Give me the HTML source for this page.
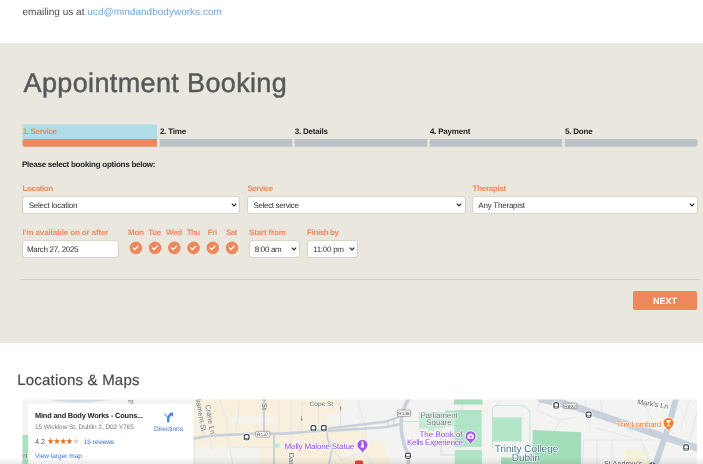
<!DOCTYPE html>
<html lang="en">
<head>
<meta charset="utf-8">
<title>Appointment Booking</title>
<style>
*{box-sizing:border-box;margin:0;padding:0}
html,body{width:703px;height:464px;overflow:hidden;background:#fff}
body{font-family:"Liberation Sans",sans-serif;position:relative;color:#444;text-rendering:geometricPrecision}
#root{position:absolute;left:0;top:0;width:703px;height:464px;will-change:transform}
.abs{position:absolute;white-space:nowrap}
#top{left:22.5px;top:6px;font-size:10px;line-height:14px;color:#4a4a4a;letter-spacing:0.02px}
#top a{color:#6fa8dc;text-decoration:none}
#panel{left:0;top:43px;width:703px;height:300px;background:#eae7df}
#h1{left:23.6px;top:63.4px;font-size:27px;line-height:40px;color:#57585a;letter-spacing:0.36px;-webkit-text-stroke:0.45px #57585a}
.step{top:124.4px;height:23px}
.step .lbl{height:14.5px;font-size:8px;line-height:15px;font-weight:bold;color:#222;padding-left:0.2px}
.step .bar{height:7.9px}
.step.on .lbl{color:#ef875d}
.b8{font-size:8px;line-height:10px;font-weight:bold;letter-spacing:-0.25px}
.or{color:#ef875d}
.sel{background:#fff;box-shadow:0 0 0 0.6px #c8c5be;border-radius:2px;padding-top:0.6px;font-size:8px;line-height:16.6px;color:#333}
.sel svg{position:absolute;right:2.2px;top:6.2px}
#hr{left:19.5px;top:279px;width:680.2px;height:1px;background:#d0cdc6}
#next{left:633px;top:291px;width:64px;height:19px;background:#ef875d;border-radius:2px;color:#fff;font-size:9px;font-weight:bold;line-height:20.4px;text-align:center;letter-spacing:0px}
#h2{left:17.2px;top:370.4px;font-size:15px;line-height:22px;color:#4a4a4a;letter-spacing:0.2px;-webkit-text-stroke:0.2px #4a4a4a}
</style>
</head>
<body>
<div id="root">
<div id="top" class="abs">emailing us at <a>ucd@mindandbodyworks.com</a></div>
<div id="panel" class="abs"></div>
<div id="h1" class="abs">Appointment Booking</div>

<svg class="abs" style="left:0;top:120px" width="703" height="30" viewBox="0 120 703 30">
<rect x="22.5" y="124.5" width="134.5" height="14.6" fill="#aedde5"/>
<path d="M24.5 139H157V146.8H24.5Q22.5 146.8 22.5 144.8V141Q22.5 139 24.5 139Z" fill="#ef875d"/>
<rect x="159.7" y="139" width="132.5" height="7.8" fill="#bcc2c8"/>
<rect x="294.6" y="139" width="132.7" height="7.8" fill="#bcc2c8"/>
<rect x="429.7" y="139" width="132.5" height="7.8" fill="#bcc2c8"/>
<path d="M564.9 139H695.5Q697.5 139 697.5 141V144.8Q697.5 146.8 695.5 146.8H564.9Z" fill="#bcc2c8"/>
</svg>
<div class="abs step on" style="left:22.5px;width:134.5px"><div class="lbl" style="letter-spacing:-0.34px">1. Service</div><div class="bar"></div></div>
<div class="abs step" style="left:159.7px;width:132.5px"><div class="lbl" style="letter-spacing:-0.2px">2. Time</div><div class="bar"></div></div>
<div class="abs step" style="left:294.6px;width:132.7px"><div class="lbl" style="letter-spacing:-0.21px">3. Details</div><div class="bar"></div></div>
<div class="abs step" style="left:429.7px;width:132.5px"><div class="lbl" style="letter-spacing:-0.2px">4. Payment</div><div class="bar"></div></div>
<div class="abs step last" style="left:564.9px;width:132.6px"><div class="lbl" style="letter-spacing:-0.23px">5. Done</div><div class="bar"></div></div>

<div class="abs b8" style="left:22px;top:160px;color:#222">Please select booking options below:</div>

<div class="abs b8 or" style="left:22.6px;top:183.7px;letter-spacing:-0.39px">Location</div>
<div class="abs b8 or" style="left:247.4px;top:183.7px;letter-spacing:-0.45px">Service</div>
<div class="abs b8 or" style="left:472.6px;top:183.7px;letter-spacing:-0.3px">Therapist</div>
<div class="abs sel" style="left:23px;top:197px;width:216.4px;height:16.0px;padding-left:5.7px;letter-spacing:-0.23px">Select location<svg width="6" height="4" viewBox="0 0 6 4"><path d="M0.8 0.7l2.2 2.2l2.2-2.2" fill="none" stroke="#222" stroke-width="1.15"/></svg></div>
<div class="abs sel" style="left:248px;top:197px;width:216.6px;height:16.0px;padding-left:5.5px;letter-spacing:-0.34px">Select service<svg width="6" height="4" viewBox="0 0 6 4"><path d="M0.8 0.7l2.2 2.2l2.2-2.2" fill="none" stroke="#222" stroke-width="1.15"/></svg></div>
<div class="abs sel" style="left:473px;top:197px;width:224.1px;height:16.0px;padding-left:5.3px;letter-spacing:-0.216px">Any Therapist<svg width="6" height="4" viewBox="0 0 6 4"><path d="M0.8 0.7l2.2 2.2l2.2-2.2" fill="none" stroke="#222" stroke-width="1.15"/></svg></div>

<div class="abs b8 or" style="left:22.6px;top:227.8px;letter-spacing:-0.134px">I'm available on or after</div>
<div class="abs b8 or" style="left:128.1px;top:227.8px;letter-spacing:-0.38px">Mon</div>
<div class="abs b8 or" style="left:148.3px;top:227.8px;letter-spacing:-0.35px">Tue</div>
<div class="abs b8 or" style="left:166px;top:227.8px;letter-spacing:-0.25px">Wed</div>
<div class="abs b8 or" style="left:186.8px;top:227.8px;letter-spacing:-0.62px">Thu</div>
<div class="abs b8 or" style="left:207.7px;top:227.8px;letter-spacing:-0.34px">Fri</div>
<div class="abs b8 or" style="left:225.9px;top:227.8px;letter-spacing:-0.55px">Sat</div>
<div class="abs b8 or" style="left:249px;top:227.8px;letter-spacing:-0.16px">Start from</div>
<div class="abs b8 or" style="left:307.1px;top:227.8px;letter-spacing:-0.4px">Finish by</div>

<div class="abs sel" style="left:22.7px;top:241px;width:95.3px;height:15.6px;padding-left:4.3px;letter-spacing:-0.31px">March 27, 2025</div>
<svg class="abs" style="left:0;top:236px" width="300" height="24" viewBox="0 236 300 24"><circle cx="135.90" cy="247.9" r="6.3" fill="#ef875d"/><path d="M133.30 248L134.80 249.6L138.00 246.3" fill="none" stroke="#fff" stroke-width="1.3" stroke-linecap="round" stroke-linejoin="round"/><circle cx="155.12" cy="247.9" r="6.3" fill="#ef875d"/><path d="M152.52 248L154.02 249.6L157.22 246.3" fill="none" stroke="#fff" stroke-width="1.3" stroke-linecap="round" stroke-linejoin="round"/><circle cx="174.34" cy="247.9" r="6.3" fill="#ef875d"/><path d="M171.74 248L173.24 249.6L176.44 246.3" fill="none" stroke="#fff" stroke-width="1.3" stroke-linecap="round" stroke-linejoin="round"/><circle cx="193.56" cy="247.9" r="6.3" fill="#ef875d"/><path d="M190.96 248L192.46 249.6L195.66 246.3" fill="none" stroke="#fff" stroke-width="1.3" stroke-linecap="round" stroke-linejoin="round"/><circle cx="212.78" cy="247.9" r="6.3" fill="#ef875d"/><path d="M210.18 248L211.68 249.6L214.88 246.3" fill="none" stroke="#fff" stroke-width="1.3" stroke-linecap="round" stroke-linejoin="round"/><circle cx="232.00" cy="247.9" r="6.3" fill="#ef875d"/><path d="M229.40 248L230.90 249.6L234.10 246.3" fill="none" stroke="#fff" stroke-width="1.3" stroke-linecap="round" stroke-linejoin="round"/></svg>
<div class="abs sel" style="left:249.9px;top:241px;width:49.0px;height:15.6px;padding-left:4.9px;letter-spacing:-0.33px">8:00 am<svg width="6" height="4" viewBox="0 0 6 4"><path d="M0.8 0.7l2.2 2.2l2.2-2.2" fill="none" stroke="#222" stroke-width="1.15"/></svg></div>
<div class="abs sel" style="left:307.7px;top:241px;width:49.3px;height:15.6px;padding-left:5.4px;letter-spacing:-0.26px">11:00 pm<svg width="6" height="4" viewBox="0 0 6 4"><path d="M0.8 0.7l2.2 2.2l2.2-2.2" fill="none" stroke="#222" stroke-width="1.15"/></svg></div>

<div id="hr" class="abs"></div>
<div id="next" class="abs">NEXT</div>

<div id="h2" class="abs">Locations &amp; Maps</div>
<svg id="mapsvg" class="abs" style="left:0;top:0" width="703" height="464" viewBox="0 0 703 464">
<defs><clipPath id="mc"><rect x="22.5" y="399.5" width="674.5" height="65"/></clipPath><linearGradient id="shade" x1="0" y1="0" x2="0" y2="1"><stop offset="0" stop-color="#000" stop-opacity="0"/><stop offset="1" stop-color="#000" stop-opacity="0.08"/></linearGradient><filter id="soft"><feGaussianBlur stdDeviation="1.2"/></filter></defs>
<g clip-path="url(#mc)" font-family="Liberation Sans, sans-serif">
<rect x="22" y="399" width="676" height="66" fill="#f3f3f1"/>
<path d="M193 399H343L342 428L366 426V440L384 442L388 464H193Z" fill="#f8f0dc"/>
<path d="M380 457L387 455L390 464H380Z" fill="#f8f0dc"/>
<path d="M625 450H646L650 464H625Z" fill="#f8f1da"/>
<g filter="url(#soft)" fill="#f4f3ef"><rect x="194" y="447" width="66" height="20"/><rect x="231" y="416.5" width="46" height="6.5"/><rect x="326" y="414" width="16" height="10"/><rect x="345" y="448" width="14" height="8"/></g>
<rect x="22" y="435" width="6.5" height="30" fill="#a9e2c0"/>
<path d="M48 399.5H112Q95 402.6 80 402.6Q62 402.6 48 399.5Z" fill="#d2dce6"/>
<text x="128" y="403.6" font-size="6" fill="#666b70">St</text>
<path d="M454 399H482.3V404.5H454Z" fill="#a4ddb9"/>
<path d="M419 412.2H445.4V428.6H434V431H428V428.6H419Z" fill="#c6ecd6"/>
<path d="M445.4 410.3H481.5V426H454.5V447H481.5V426H454.5V410.3Z" fill="#b2e5c7"/>
<rect x="454.5" y="410.3" width="27" height="36.7" fill="#b2e5c7"/>
<rect x="445.4" y="410.3" width="10" height="16" fill="#c6ecd6"/>
<rect x="454.7" y="450" width="27.3" height="15" fill="#b2e5c7"/>
<rect x="492.5" y="417.3" width="29.2" height="24" fill="#b2e5c7"/>
<path d="M532.7 430L581 432.2V465H532.7Z" fill="#a4ddb9"/>
<rect x="501" y="457.5" width="31.5" height="8" fill="#a4ddb9"/>
<rect x="274" y="443.6" width="5.6" height="4.2" fill="#b9ecd0"/>
<g fill="none" stroke="#a5dcbc" stroke-width="0.6"><path d="M492.5 448V409Q493 405.5 497 405.5H521Q529 407 530 414V456H518"/><path d="M402 421.5H419M445 411.5H482M441 430V455H454.5M428 431V436M462 399V410M454.5 425.8H481.5"/></g>
<g fill="none" stroke="#e4e7ea" stroke-width="1.2"><path d="M219.2 399Q222 410 227 418V434L232.7 464M239.8 399L236.2 432M210 435L211.5 450M194.3 437V464M231 447H274M279 399V433"/><path d="M290.7 399V464M301.6 403.7V432M318.4 403.7V430M340.5 403.7V428M301.6 403.7H340.5"/><path d="M357.5 399Q361 415 366 426.4V439"/><path d="M332 449L342 460.6L353 455L364.6 452L372 464M353 455L357 464"/><path d="M500 399L497 405M541 399L537 411L560 420L575 417M585 399L590 428M600 399L603 416M560 420L555 430M596 428L640 440M613 420L633 432M640 399L652 418M690 399L681 428M697 412L690 440M583 440H655M583 440V464M597 440V464M612 440V464M640 436L650 464"/></g>
<g fill="none" stroke="#c8d1db" stroke-linecap="round" stroke-linejoin="round"><path d="M197.6 399L203 435" stroke-width="2.4" stroke="#e3e7ea"/><path d="M264 399V433" stroke-width="2"/><path d="M274 434V464" stroke-width="2"/><path d="M193 438.6L211.3 435.7L255.4 433.6H285L327.7 430" stroke-width="2.7"/><path d="M327.7 428.6L385 421.8L398.5 417.2" stroke-width="2.4"/><path d="M327.7 431L385 427.3L401 424" stroke-width="2.4"/><path d="M388 421V427M394 419V426" stroke-width="1"/><path d="M327 433L327.7 439L332 449L329 464" stroke-width="1.8"/><path d="M408.6 399Q402 410 401.3 419.3V430Q403 444 408.4 455V464" stroke-width="3.6"/><path d="M541 399L575 406.8L697 448" stroke-width="7"/><path d="M676 399L667.5 430L655.5 464" stroke-width="6"/><path d="M560 399L575 406" stroke-width="3"/></g>
<g fill="#7d8288"><path d="M300.6 419h2l-1 2.4zM339.5 408.4h2l-1-2.4z"/><path d="M301.3 416h0.6v3h-0.6zM340.2 408h0.6v3h-0.6z"/><path d="M651 426l2.4 0.6-1.6 1.6z"/></g>
<g font-family="Liberation Sans, sans-serif"><rect x="255.7" y="431.3" width="14.1" height="5.8" rx="1" fill="#fff" stroke="#6b6b6b" stroke-width="0.55"/><text x="262.8" y="435.8" font-size="4.8" fill="#444" text-anchor="middle">R137</text><rect x="397.4" y="410" width="13.2" height="6.3" rx="1" fill="#fff" stroke="#6b6b6b" stroke-width="0.55"/><text x="404.0" y="414.8" font-size="4.8" fill="#444" text-anchor="middle">R138</text><rect x="563.4" y="403.2" width="13.4" height="5.4" rx="1" fill="#fff" stroke="#6b6b6b" stroke-width="0.55"/><text x="570.1" y="407.5" font-size="4.8" fill="#444" text-anchor="middle">R802</text></g>
<circle cx="246.6" cy="437.1" r="4.1" fill="#fff" opacity="0.9"/><rect x="243.7" y="434.0" width="5.8" height="6.2" rx="1.6" fill="#36454f"/><rect x="244.9" y="435.2" width="3.4" height="2.9" rx="0.5" fill="#fff"/><rect x="244.9" y="438.6" width="3.4" height="0.8" fill="#dfe4e8"/>
<circle cx="313.4" cy="428.2" r="4.1" fill="#fff" opacity="0.9"/><rect x="310.5" y="425.1" width="5.8" height="6.2" rx="1.6" fill="#36454f"/><rect x="311.7" y="426.3" width="3.4" height="2.9" rx="0.5" fill="#fff"/><rect x="311.7" y="429.7" width="3.4" height="0.8" fill="#dfe4e8"/>
<circle cx="323.8" cy="428.1" r="4.1" fill="#fff" opacity="0.9"/><rect x="320.9" y="425.0" width="5.8" height="6.2" rx="1.6" fill="#36454f"/><rect x="322.1" y="426.2" width="3.4" height="2.9" rx="0.5" fill="#fff"/><rect x="322.1" y="429.6" width="3.4" height="0.8" fill="#dfe4e8"/>
<circle cx="408" cy="455.6" r="4.1" fill="#fff" opacity="0.9"/><rect x="405.1" y="452.5" width="5.8" height="6.2" rx="1.6" fill="#36454f"/><rect x="406.3" y="453.7" width="3.4" height="2.9" rx="0.5" fill="#fff"/><rect x="406.3" y="457.1" width="3.4" height="0.8" fill="#dfe4e8"/>
<circle cx="556.2" cy="405.4" r="4.1" fill="#fff" opacity="0.9"/><rect x="553.3" y="402.3" width="5.8" height="6.2" rx="1.6" fill="#36454f"/><rect x="554.5" y="403.5" width="3.4" height="2.9" rx="0.5" fill="#fff"/><rect x="554.5" y="406.9" width="3.4" height="0.8" fill="#dfe4e8"/>
<circle cx="588.6" cy="414.6" r="4.1" fill="#fff" opacity="0.9"/><rect x="585.7" y="411.5" width="5.8" height="6.2" rx="1.6" fill="#36454f"/><rect x="586.9" y="412.7" width="3.4" height="2.9" rx="0.5" fill="#fff"/><rect x="586.9" y="416.1" width="3.4" height="0.8" fill="#dfe4e8"/>
<circle cx="686.1" cy="447.4" r="4.1" fill="#fff" opacity="0.9"/><rect x="683.2" y="444.3" width="5.8" height="6.2" rx="1.6" fill="#36454f"/><rect x="684.4" y="445.5" width="3.4" height="2.9" rx="0.5" fill="#fff"/><rect x="684.4" y="448.9" width="3.4" height="0.8" fill="#dfe4e8"/>
<g font-size="7.3" fill="#666b70" stroke="#fff" stroke-opacity="0.7" stroke-width="0.8" paint-order="stroke" stroke-linejoin="round"><text x="309.6" y="406.2" font-size="6.5">Cope St</text><text transform="translate(195.8 399.5) rotate(80)" x="0" y="0">liament St</text><text transform="translate(205.3 405) rotate(80)">Crane Ln</text><text transform="translate(261.5 397) rotate(90)">e St</text><text transform="translate(289 452.8) rotate(90)">Dam</text><text transform="translate(637 404) rotate(9)">Mark&#39;s Ln</text><text x="604" y="465.8">St Andrew&#39;s</text><text x="23" y="458.4" font-size="8" fill="#55595e">ri</text></g>
<g font-size="8" fill="#73777b" text-anchor="middle" stroke="#fff" stroke-opacity="0.8" stroke-width="1" paint-order="stroke" letter-spacing="-0.1"><text x="439" y="418">Parliament</text><text x="438.9" y="425.1">Square</text></g>
<g font-size="8" fill="#9348dd" stroke="#fff" stroke-opacity="0.85" stroke-width="1.2" paint-order="stroke" stroke-linejoin="round"><text x="284.6" y="449.4" letter-spacing="-0.16">Molly Malone Statue</text><text x="462.6" y="436.8" text-anchor="end">The Book of</text><text x="462.6" y="444.6" text-anchor="end" letter-spacing="-0.25">Kells Experience</text></g>
<g font-size="10" fill="#4b7889" text-anchor="middle" stroke="#fff" stroke-opacity="0.85" stroke-width="1.3" paint-order="stroke" stroke-linejoin="round"><text x="526.5" y="451.6">Trinity College</text><text x="525.9" y="461.2">Dublin</text></g>
<text x="616.4" y="427.3" font-size="8" fill="#e2772a" stroke="#fff" stroke-opacity="0.85" stroke-width="1.2" paint-order="stroke" stroke-linejoin="round" letter-spacing="-0.28">The Lombard</text>
<path d="M362.5 453.2l-2.5-3.4a5.5 5.5 0 1 1 5 0z" fill="#a156e8" stroke="#fff" stroke-width="0.9"/>
<path d="M362.5 441.2l1.9 6.2h-3.8z" fill="#fff"/><circle cx="362.5" cy="442.3" r="1.1" fill="#fff"/>
<path d="M470.6 444.6l-2.5-3.4a5.5 5.5 0 1 1 5 0z" fill="#a156e8" stroke="#fff" stroke-width="0.9"/>
<rect x="467.6" y="434.5" width="6" height="4.3" rx="0.8" fill="#fff"/><rect x="469.3" y="433.5" width="2.6" height="1.4" fill="#fff"/><circle cx="470.6" cy="436.7" r="1.15" fill="#a156e8"/>
<path d="M668.5 431.2l-2.5-3.4a5.5 5.5 0 1 1 5 0z" fill="#f37e27" stroke="#fff" stroke-width="0.9"/>
<path d="M665.7 420.3h5.6l-2.4 2.9v2.3h1.4v0.8h-3.6v-0.8h1.4v-2.3z" fill="#fff"/>
<path d="M355 464.5v-2.5q0-1.5 1.5-1.5h5q1.5 0 1.5 1.5v2.5z" fill="#e5453b"/>
<circle cx="652.4" cy="466.3" r="4.6" fill="#5a7687" stroke="#fff" stroke-width="0.8"/><rect x="652" y="462.6" width="0.9" height="2" fill="#fff"/>
<rect x="28.3" y="403.7" width="165.1" height="62" fill="#fff"/>
<text x="35" y="417.9" font-size="7.4" font-weight="bold" fill="#222" letter-spacing="-0.18">Mind and Body Works - Couns...</text>
<text x="35" y="429.3" font-size="6.5" fill="#777" letter-spacing="-0.06">15 Wicklow St, Dublin 2, D02 Y765</text>
<text x="35" y="443.9" font-size="7.2" fill="#555">4.2</text>
<text x="47" y="444.3" font-size="8.2" fill="#e7711b" letter-spacing="-1.05">★★★★<tspan fill="#d0d0d0">★</tspan></text>
<text x="83.8" y="443.9" font-size="6.6" fill="#3b73d9" letter-spacing="-0.13">16 reviews</text>
<text x="35" y="458.1" font-size="6.6" fill="#3b73d9" letter-spacing="-0.04">View larger map</text>
<text x="154" y="431.4" font-size="6.6" fill="#3b73d9" letter-spacing="-0.03">Directions</text>
<path d="M164.4 413.7L168 417.6" fill="none" stroke="#aac6f7" stroke-width="2"/>
<path d="M168.2 422.3V419Q168.2 415.6 171.2 414.4" fill="none" stroke="#4a83ea" stroke-width="2.3"/><path d="M173.3 412.5l-4.3 0.4l3.9 3.9z" fill="#4a83ea"/>
</g>
<rect x="0" y="457" width="703" height="7" fill="url(#shade)"/>
</svg>

</div>
</body>
</html>
